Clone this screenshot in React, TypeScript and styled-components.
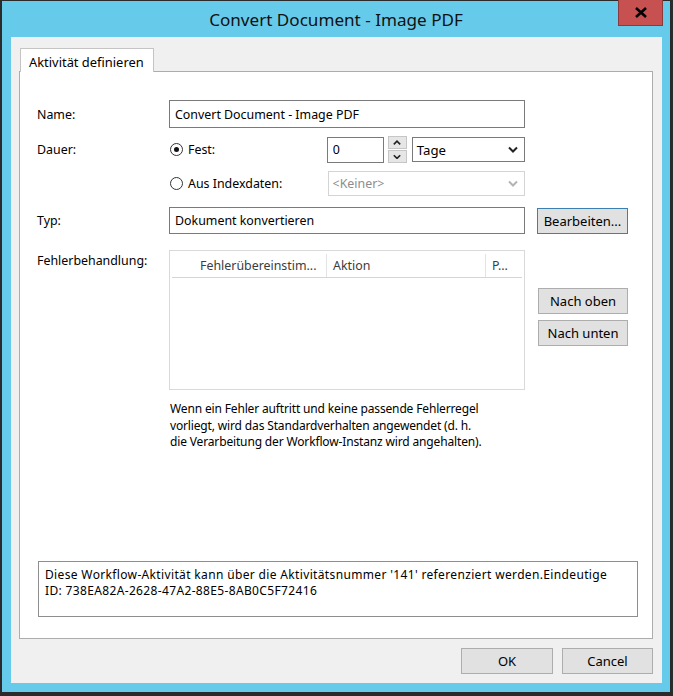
import styled, { createGlobalStyle } from 'styled-components'

const GlobalStyle = createGlobalStyle`
  html, body {
    margin: 0;
    padding: 0;
    background: #2b2b2b;
  }
  body {
    font-family: 'Noto Sans', 'Liberation Sans', sans-serif;
    color: #000;
  }
`

const Window = styled.div`
  width: 668px;
  height: 691px;
  margin: 1px 0 0 2px;
  background: #66cbea;
  display: flex;
  flex-direction: column;
`

const TitleBar = styled.div`
  height: 36px;
  display: grid;
  grid-template-columns: 1fr auto 1fr;
  align-items: start;
`

const Title = styled.div`
  grid-column: 2;
  font-size: 17.1px;
  line-height: 20px;
  padding-top: 9px;
  color: #111;
  white-space: nowrap;
`

const CloseButton = styled.div`
  grid-column: 3;
  justify-self: end;
  width: 43px;
  height: 25px;
  margin: -1px 7px 0 0;
  background: #c75050;
  border: 1px solid #8a3a3a;
  border-top: none;
  display: flex;
  align-items: center;
  justify-content: center;
`

const Client = styled.div`
  flex: 1;
  margin: 0 8px 9px 9px;
  background: #f0f0f0;
  display: flex;
  flex-direction: column;
  padding: 11px 9px 9px 8px;
  font-size: 12.4px;
`

const TabStrip = styled.div`
  display: flex;
  padding-left: 1px;
  height: 23px;
`

const Tab = styled.div`
  width: 134px;
  height: 24px;
  box-sizing: border-box;
  background: #fff;
  border: 1px solid #c4c4c4;
  border-bottom: none;
  padding: 4px 0 0 8px;
  position: relative;
  z-index: 1;
  white-space: nowrap;
  font-size: 12.9px;
`

const TabPanel = styled.div`
  flex: 1;
  background: #fff;
  border: 1px solid #acacac;
  padding: 28px 16px 21px 17px;
  display: flex;
  flex-direction: column;
`

const FormRow = styled.div<{ $gap: number; $top?: boolean }>`
  display: grid;
  grid-template-columns: 132px 356px auto;
  align-items: ${(p) => (p.$top ? 'start' : 'center')};
  margin-top: ${(p) => p.$gap}px;
`

const Label = styled.div<{ $pad?: number }>`
  padding-top: ${(p) => p.$pad ?? 0}px;
`

const TextInput = styled.input<{ $h: number }>`
  box-sizing: border-box;
  width: 100%;
  height: ${(p) => p.$h}px;
  border: 1px solid #7a7a7a;
  padding: 0 5px;
  font: inherit;
  color: #000;
  background: #fff;
  outline: none;
`

const Inline = styled.div`
  display: flex;
  align-items: center;
`

const RadioLabel = styled.label`
  width: 159px;
  display: flex;
  align-items: center;
  gap: 5px;
  padding-left: 1px;
  box-sizing: border-box;
`

const RadioCircle = styled.span<{ $checked?: boolean }>`
  width: 13px;
  height: 13px;
  box-sizing: border-box;
  border-radius: 50%;
  border: 1px solid #333;
  background: #fff;
  display: flex;
  align-items: center;
  justify-content: center;

  &::after {
    content: '';
    width: 5px;
    height: 5px;
    border-radius: 50%;
    background: ${(p) => (p.$checked ? '#111' : 'transparent')};
  }
`

const NumberInput = styled(TextInput)`
  width: 57px;
`

const Spinner = styled.div`
  display: flex;
  flex-direction: column;
  gap: 1px;
  margin-left: 4px;
`

const SpinButton = styled.div`
  width: 19px;
  height: 13px;
  box-sizing: border-box;
  background: #e6e6e6;
  border: 1px solid #c6c6c6;
  display: flex;
  align-items: center;
  justify-content: center;
`

const Select = styled.div<{ $w: number; $disabled?: boolean }>`
  width: ${(p) => p.$w}px;
  height: 25px;
  box-sizing: border-box;
  margin-left: ${(p) => (p.$disabled ? 0 : 5)}px;
  border: 1px solid ${(p) => (p.$disabled ? '#d4d4d4' : '#7a7a7a')};
  color: ${(p) => (p.$disabled ? '#8d8d8d' : '#000')};
  font-size: ${(p) => (p.$disabled ? 12.4 : 13.2)}px;
  display: flex;
  align-items: center;
  justify-content: space-between;
  padding: 0 6px 0 4px;
  background: #fff;
`

const Button = styled.button<{ $w: number; $focus?: boolean }>`
  width: ${(p) => p.$w}px;
  height: 26px;
  box-sizing: border-box;
  background: #e1e1e1;
  border: 1px solid ${(p) => (p.$focus ? '#3c7fb1' : '#adadad')};
  font: inherit;
  font-size: 13px;
  color: #000;
  padding: 0;
`

const SideButtons = styled.div`
  display: flex;
  flex-direction: column;
  gap: 6px;
  margin: 38px 0 0 13px;
`

const ListView = styled.div`
  height: 140px;
  box-sizing: border-box;
  border: 1px solid #d9d9d9;
  padding: 3px 2px;
  background: #fff;
`

const ListHeader = styled.div`
  display: grid;
  grid-template-columns: 155px 159px 1fr;
  height: 24px;
  border-bottom: 1px solid #d5d5d5;
  box-sizing: border-box;
  color: #3c3c3c;
`

const HeaderCell = styled.div<{ $pad: number }>`
  display: flex;
  align-items: center;
  padding-left: ${(p) => p.$pad}px;
  border-right: 1px solid #e3e3e3;
  white-space: nowrap;
  &:last-child {
    border-right: none;
  }
`

const HelpText = styled.div`
  grid-column: 2;
  margin: 11px 0 0 1px;
  line-height: 16.5px;
  font-size: 12px;
  letter-spacing: -0.15px;
`

const InfoBox = styled.div`
  margin: auto 0 0 1px;
  width: 600px;
  height: 56px;
  box-sizing: border-box;
  border: 1px solid #8e8e8e;
  padding: 5px 6px;
  line-height: 16.4px;
  font-size: 12px;
  letter-spacing: 0.35px;
`

const Footer = styled.div`
  display: flex;
  justify-content: flex-end;
  gap: 9px;
  margin-top: 9px;
`

const Chevron = ({ color = '#222', up = false, w = 10 }: { color?: string; up?: boolean; w?: number }) => (
  <svg width={w} height={w * 0.7} viewBox="0 0 10 7">
    <polyline
      points={up ? '1,5.5 5,1.5 9,5.5' : '1,1.5 5,5.5 9,1.5'}
      fill="none"
      stroke={color}
      strokeWidth="2"
    />
  </svg>
)

export default function App() {
  return (
    <>
      <GlobalStyle />
      <Window>
        <TitleBar>
          <Title>Convert Document - Image PDF</Title>
          <CloseButton>
            <svg width="14" height="11" viewBox="0 0 14 11">
              <path d="M2 1 L12 10 M12 1 L2 10" stroke="#000" strokeWidth="2.6" />
            </svg>
          </CloseButton>
        </TitleBar>
        <Client>
          <TabStrip>
            <Tab>Aktivität definieren</Tab>
          </TabStrip>
          <TabPanel>
            <FormRow $gap={0}>
              <Label>Name:</Label>
              <TextInput $h={28} readOnly defaultValue="Convert Document - Image PDF" />
            </FormRow>
            <FormRow $gap={8}>
              <Label>Dauer:</Label>
              <Inline>
                <RadioLabel>
                  <RadioCircle $checked />
                  Fest:
                </RadioLabel>
                <NumberInput $h={26} readOnly defaultValue="0" />
                <Spinner>
                  <SpinButton>
                    <Chevron up w={8} />
                  </SpinButton>
                  <SpinButton>
                    <Chevron w={8} />
                  </SpinButton>
                </Spinner>
                <Select $w={114}>
                  Tage
                  <Chevron />
                </Select>
              </Inline>
            </FormRow>
            <FormRow $gap={8}>
              <Label />
              <Inline>
                <RadioLabel>
                  <RadioCircle />
                  Aus Indexdaten:
                </RadioLabel>
                <Select $w={198} $disabled>
                  &lt;Keiner&gt;
                  <Chevron color="#b4b4b4" />
                </Select>
              </Inline>
            </FormRow>
            <FormRow $gap={11}>
              <Label>Typ:</Label>
              <TextInput $h={27} readOnly defaultValue="Dokument konvertieren" />
              <Button $w={91} $focus style={{ marginLeft: 12 }}>
                Bearbeiten...
              </Button>
            </FormRow>
            <FormRow $gap={16} $top>
              <Label $pad={2}>Fehlerbehandlung:</Label>
              <ListView>
                <ListHeader>
                  <HeaderCell $pad={28}>Fehlerübereinstim...</HeaderCell>
                  <HeaderCell $pad={6}>Aktion</HeaderCell>
                  <HeaderCell $pad={6}>P...</HeaderCell>
                </ListHeader>
              </ListView>
              <SideButtons>
                <Button $w={90}>Nach oben</Button>
                <Button $w={90}>Nach unten</Button>
              </SideButtons>
              <HelpText>
                Wenn ein Fehler auftritt und keine passende Fehlerregel
                <br />
                vorliegt, wird das Standardverhalten angewendet (d. h.
                <br />
                die Verarbeitung der Workflow-Instanz wird angehalten).
              </HelpText>
            </FormRow>
            <InfoBox>
              Diese Workflow-Aktivität kann über die Aktivitätsnummer '141' referenziert werden.Eindeutige
              <br />
              ID: 738EA82A-2628-47A2-88E5-8AB0C5F72416
            </InfoBox>
          </TabPanel>
          <Footer>
            <Button $w={92}>OK</Button>
            <Button $w={91}>Cancel</Button>
          </Footer>
        </Client>
      </Window>
    </>
  )
}
